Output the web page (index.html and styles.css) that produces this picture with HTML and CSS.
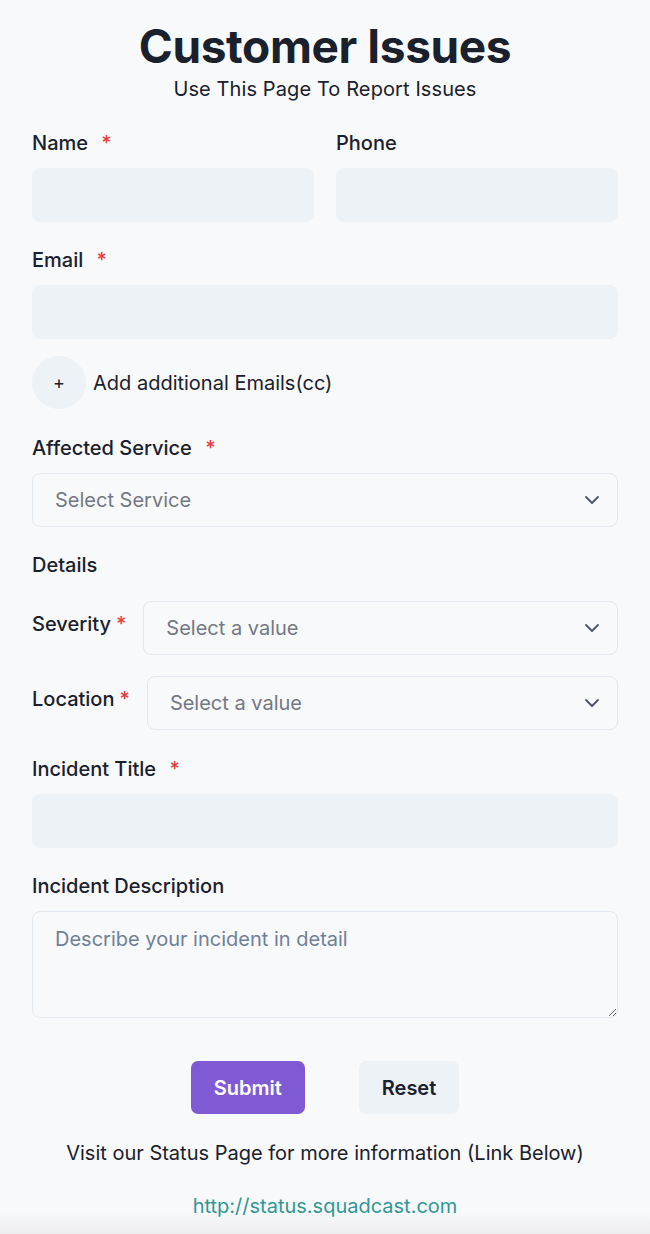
FILE: index.html
```html
<!DOCTYPE html>
<html lang="en">
<head>
  <meta charset="UTF-8">
  <meta name="viewport" content="width=device-width, initial-scale=1.0">
  <title>Customer Issues</title>
  <link rel="stylesheet" href="styles.css">
</head>
<body>
  <div class="page">
    <div class="header">
      <h1>Customer Issues</h1>
      <p>Use This Page To Report Issues</p>
    </div>

    <form class="form">
      <div class="row-2">
        <div class="field">
          <label>Name <span class="req">*</span></label>
          <input type="text" class="input">
        </div>
        <div class="field">
          <label>Phone</label>
          <input type="text" class="input">
        </div>
      </div>

      <div class="field">
        <label>Email <span class="req">*</span></label>
        <input type="email" class="input">
      </div>

      <div class="add-cc">
        <button type="button" class="circle-btn">+</button>
        <span>Add additional Emails(cc)</span>
      </div>

      <div class="field">
        <label>Affected Service <span class="req">*</span></label>
        <div class="select-wrap">
          <select class="select">
            <option>Select Service</option>
          </select>
          <svg class="chevron" viewBox="0 0 24 24" width="24" height="24"><path d="M6 9l6 6 6-6" fill="none" stroke="#4a5568" stroke-width="1.8" stroke-linecap="round" stroke-linejoin="round"/></svg>
        </div>
      </div>

      <div class="section-label">Details</div>

      <div class="inline-field">
        <label>Severity<span class="req-tight">*</span></label>
        <div class="select-wrap">
          <select class="select">
            <option>Select a value</option>
          </select>
          <svg class="chevron" viewBox="0 0 24 24" width="24" height="24"><path d="M6 9l6 6 6-6" fill="none" stroke="#4a5568" stroke-width="1.8" stroke-linecap="round" stroke-linejoin="round"/></svg>
        </div>
      </div>

      <div class="inline-field">
        <label>Location<span class="req-tight">*</span></label>
        <div class="select-wrap">
          <select class="select">
            <option>Select a value</option>
          </select>
          <svg class="chevron" viewBox="0 0 24 24" width="24" height="24"><path d="M6 9l6 6 6-6" fill="none" stroke="#4a5568" stroke-width="1.8" stroke-linecap="round" stroke-linejoin="round"/></svg>
        </div>
      </div>

      <div class="field field-title">
        <label>Incident Title <span class="req">*</span></label>
        <input type="text" class="input">
      </div>

      <div class="field">
        <label>Incident Description</label>
        <textarea class="textarea" placeholder="Describe your incident in detail"></textarea>
      </div>

      <div class="actions">
        <button type="submit" class="btn btn-primary">Submit</button>
        <button type="reset" class="btn btn-secondary">Reset</button>
      </div>
    </form>

    <div class="footer">
      <p>Visit our Status Page for more information (Link Below)</p>
      <a href="#">http://status.squadcast.com</a>
    </div>
  </div>
</body>
</html>
```

FILE: styles.css
```css
* { box-sizing: border-box; margin: 0; padding: 0; }
body {
  font-family: 'Inter', sans-serif;
  background: linear-gradient(to bottom, #f8f9fb 0, #f8f9fb 1212px, #ececee 1234px);
  color: #1a202c;
  min-height: 1234px;
}
.page {
  padding: 18px 32px 0;
}
.header {
  text-align: center;
}
.header h1 {
  font-size: 46px;
  font-weight: 700;
  line-height: 56px;
  letter-spacing: -0.4px;
  color: #1a202c;
}
.header p {
  font-size: 20px;
  line-height: 30px;
  letter-spacing: 0.1px;
}
.form {
  margin-top: 24px;
}
.row-2 {
  display: grid;
  grid-template-columns: 1fr 1fr;
  gap: 22px;
}
.field {
  margin-bottom: 23px;
}
.field label,
.inline-field label,
.section-label {
  display: block;
  font-size: 20px;
  font-weight: 500;
  line-height: 30px;
  margin-bottom: 10px;
}
.req {
  color: #e53e3e;
  margin-left: 8px;
}
.req-tight {
  color: #e53e3e;
  margin-left: 5px;
}
.input {
  display: block;
  width: 100%;
  height: 54px;
  border: none;
  border-radius: 8px;
  background: #edf2f7;
  font: inherit;
  font-size: 20px;
  padding: 0 20px;
}
.add-cc {
  display: flex;
  align-items: center;
  gap: 7px;
  margin-top: -6px;
  margin-bottom: 24px;
  font-size: 20px;
}
.circle-btn {
  width: 54px;
  height: 53px;
  border-radius: 50%;
  border: none;
  background: #edf2f7;
  font: inherit;
  font-size: 18px;
  color: #1a202c;
}
.select-wrap {
  position: relative;
  flex: 1;
}
.select {
  display: block;
  width: 100%;
  height: 54px;
  border: 1px solid #e2e8f0;
  border-radius: 8px;
  background: transparent;
  appearance: none;
  -webkit-appearance: none;
  font-family: inherit;
  font-size: 20px;
  color: #737884;
  padding: 0 40px 0 22px;
}
.chevron {
  position: absolute;
  right: 14px;
  top: 15px;
  pointer-events: none;
}
.section-label {
  margin-bottom: 21px;
}
.inline-field {
  display: flex;
  align-items: center;
  margin-bottom: 21px;
}
.inline-field label {
  margin-bottom: 8px;
  margin-right: 17px;
}
.field-title {
  margin-top: 24px;
}
.textarea {
  display: block;
  width: 100%;
  height: 107px;
  border: 1px solid #e2e8f0;
  border-radius: 8px;
  background: transparent;
  font-family: inherit;
  font-size: 20px;
  line-height: 30px;
  padding: 12px 22px;
  resize: vertical;
}
.textarea::placeholder {
  color: #718096;
}
.actions {
  display: flex;
  justify-content: center;
  gap: 54px;
  margin-top: 43px;
}
.btn {
  height: 53px;
  border: none;
  border-radius: 7px;
  font-family: inherit;
  font-size: 20px;
  font-weight: 600;
  padding: 0 23px;
}
.btn-primary {
  background: #805ad5;
  color: #fff;
}
.btn-secondary {
  background: #edf2f7;
  color: #1a202c;
}
.footer {
  text-align: center;
  font-size: 20px;
  line-height: 30px;
  margin-top: 24px;
}
.footer a {
  display: inline-block;
  margin-top: 23px;
  color: #319795;
  text-decoration: none;
}
```
